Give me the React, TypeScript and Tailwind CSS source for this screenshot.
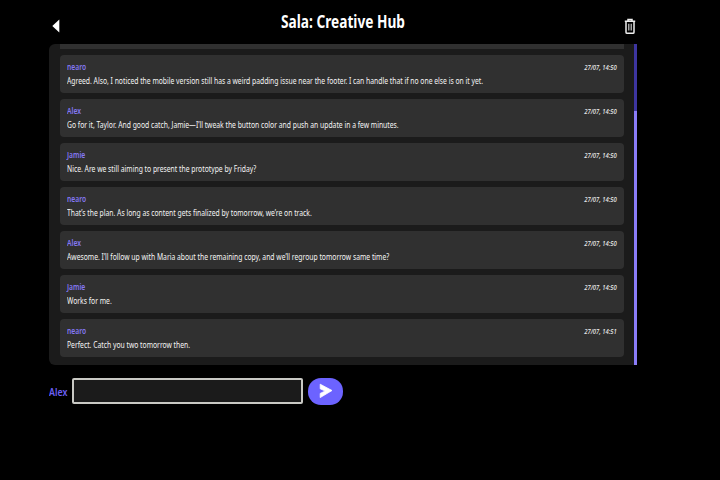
type Message = { author: string; text: string; time: string };

const messages: Message[] = [
  { author: "nearo", text: "Agreed. Also, I noticed the mobile version still has a weird padding issue near the footer. I can handle that if no one else is on it yet.", time: "27/07, 14:50" },
  { author: "Alex", text: "Go for it, Taylor. And good catch, Jamie—I’ll tweak the button color and push an update in a few minutes.", time: "27/07, 14:50" },
  { author: "Jamie", text: "Nice. Are we still aiming to present the prototype by Friday?", time: "27/07, 14:50" },
  { author: "nearo", text: "That’s the plan. As long as content gets finalized by tomorrow, we’re on track.", time: "27/07, 14:50" },
  { author: "Alex", text: "Awesome. I’ll follow up with Maria about the remaining copy, and we’ll regroup tomorrow same time?", time: "27/07, 14:50" },
  { author: "Jamie", text: "Works for me.", time: "27/07, 14:50" },
  { author: "nearo", text: "Perfect. Catch you two tomorrow then.", time: "27/07, 14:51" },
];

function MessageCard({ author, text, time }: Message) {
  return (
    <li className="flex h-[37.5px] shrink-0 justify-between rounded bg-[#303030] px-[7px] pt-[6px] whitespace-nowrap">
      <div className="min-w-0 flex-1">
        <div className="h-[12.5px] w-max origin-left scale-x-[0.84] text-[8px] leading-[12px] font-semibold text-[#8478f4]">{author}</div>
        <p className="h-[13px] w-max origin-left scale-x-[0.798] text-[8.5px] leading-[13px] text-[#f4f4f4]">{text}</p>
      </div>
      <time className="w-max shrink-0 origin-right scale-x-[0.78] pt-[0.5px] text-[7.5px] leading-[11px] font-medium text-[#eeeeee] italic">{time}</time>
    </li>
  );
}

export default function App() {
  return (
    <div className="h-[480px] w-[720px] overflow-hidden bg-black pr-[83px] pl-[49px] font-['Noto_Sans',sans-serif] text-white">
      <header className="flex h-[44px] items-start justify-between">
        <button aria-label="Back" className="mt-[19px] ml-[3px] w-[10px]">
          <svg width="8" height="14" viewBox="0 0 8 14"><path d="M7.3 .5V13.5L.3 7Z" fill="#fff" /></svg>
        </button>
        <h1 className="mt-[10px] scale-x-[0.805] text-[17px] leading-[24px] font-bold whitespace-nowrap">Sala: Creative Hub</h1>
        <button aria-label="Delete room" className="mt-[18px] mr-[1px]">
          <svg width="12" height="17" viewBox="0 0 12 17" fill="none" stroke="#eee" strokeWidth="1.5">
            <path d="M.8 3.3H11.2M4 3V1.5H8V3M2 3.5V14.2Q2 15.3 3.1 15.3H8.9Q10 15.3 10 14.2V3.5" />
            <path d="M4.8 5.8V12.6M7.2 5.8V12.6" strokeWidth="1.2" stroke="#ccc" />
          </svg>
        </button>
      </header>
      <main className="flex h-[321px] overflow-hidden rounded-l-md bg-[#1b1b1b]">
        <ul className="flex min-w-0 flex-1 flex-col gap-[6.5px] pr-[10px] pl-[11px]">
          <li className="h-[4.5px] shrink-0 bg-[#303030]" />
          {messages.map((m, i) => <MessageCard key={i} {...m} />)}
        </ul>
        <div className="w-[3px] shrink-0 bg-[#8a7cf8]">
          <div className="h-[67px] bg-[#3d35a0]" />
        </div>
      </main>
      <form className="mt-[12px] flex h-[28px] items-center">
        <label htmlFor="message" className="w-[23px] origin-left scale-x-[0.8] pt-[2px] text-[11px] font-semibold text-[#6c60f5]">Alex</label>
        <input id="message" className="h-[26px] w-[231px] rounded-[2px] border-2 border-[#c9c9c4] bg-[#1b1b1b]" />
        <button type="button" aria-label="Send" className="ml-[5px] flex h-[27px] w-[35px] items-center justify-center rounded-[13px] bg-[#6c63ff]">
          <svg width="14" height="16" viewBox="0 0 14 16"><path d="M1.2 1.2L13 7.5L1.2 14.6V10.4L6.2 8L1.2 5.8Z" fill="#fff" stroke="#fff" strokeWidth=".8" strokeLinejoin="round" /></svg>
        </button>
      </form>
    </div>
  );
}
